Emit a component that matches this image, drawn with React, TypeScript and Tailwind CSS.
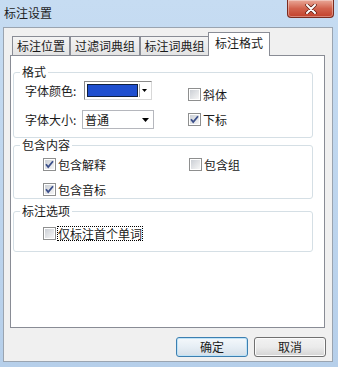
import React from 'react';

const CheckBox = ({ checked }: { checked?: boolean }) => (
  <svg width="13" height="13" viewBox="0 0 13 13" className="shrink-0">
    <defs>
      <linearGradient id="cbg" x1="0" y1="0" x2="1" y2="1">
        <stop offset="0" stopColor="#cbcfd5" />
        <stop offset="1" stopColor="#f6f6f6" />
      </linearGradient>
    </defs>
    <rect x="0.5" y="0.5" width="12" height="12" fill="#fff" stroke="#8e8f8f" />
    <rect x="2" y="2" width="9" height="9" fill="url(#cbg)" />
    {checked && (
      <path d="M3 6.2 L5.2 9 L10 3.2" fill="none" stroke="#3b4f8a" strokeWidth="1.8" />
    )}
  </svg>
);

const Option = ({ label, checked, focus }: { label: string; checked?: boolean; focus?: boolean }) => (
  <div className="flex items-center h-[13px]">
    <CheckBox checked={checked} />
    {focus ? (
      <span className="ml-[1px] border border-dotted border-black leading-[13px] px-0">{label}</span>
    ) : (
      <span className="ml-[2px] leading-[13px]">{label}</span>
    )}
  </div>
);

const Tab = ({ label, width, active }: { label: string; width: string; active?: boolean }) =>
  active ? (
    <div className={`${width} h-[24px] -mb-[1px] -ml-[1px] relative z-10 bg-white border border-b-0 border-[#898c95] flex justify-center pt-[3px] leading-[14px]`}>
      {label}
    </div>
  ) : (
    <div className={`${width} h-[19px] bg-gradient-to-b from-[#f4f4f4] to-[#e3e3e3] border border-b-0 border-[#898c95] flex justify-center pt-[2px] leading-[14px]`}>
      {label}
    </div>
  );

export default function App() {
  return (
    <div className="w-[338px] h-[367px] flex flex-col bg-gradient-to-b from-[#c6dcf2] to-[#b6cfea] font-['Noto_Sans_CJK_SC',sans-serif] text-[12px] text-[#1a1a1a] overflow-hidden">
      {/* 标题栏 */}
      <div className="h-[27px] flex justify-between shrink-0">
        <div className="pl-[4px] pt-[5px] leading-[16px] text-[12px] text-[#1e1e1e]">标注设置</div>
        <div className="mr-[4px] w-[47px] h-[18px] rounded-b-[4px] border border-t-0 border-[#7b2b1f] bg-gradient-to-b from-[#e9a898] via-[#d2634e] to-[#c2402a] shadow-[inset_0_0_0_1px_rgba(255,255,255,0.35)] flex items-center justify-center">
          <svg width="12" height="10" viewBox="0 0 12 10">
            <path d="M2 1 L10 9 M10 1 L2 9" stroke="#5a1a10" strokeWidth="3.4" strokeLinecap="round" />
            <path d="M2 1 L10 9 M10 1 L2 9" stroke="#ffffff" strokeWidth="2" strokeLinecap="round" />
          </svg>
        </div>
      </div>

      {/* 客户区 */}
      <div className="ml-[3px] mr-[5px] mb-[5px] flex-1 border border-[#9aa4b0] bg-[#f0f0f0] flex flex-col pl-[6px] pr-[7px] pt-[4px]">
        {/* 选项卡 */}
        <div className="h-[23px] flex items-end pl-[2px]">
          <Tab label="标注位置" width="w-[58px]" />
          <Tab label="过滤词典组" width="w-[70px]" />
          <Tab label="标注词典组" width="w-[69px]" />
          <Tab label="标注格式" width="w-[62px]" active />
        </div>

        <div className="h-[273px] border border-[#898c95] bg-white pl-[2px] pr-[11px] pt-[9px]">
          {/* 格式 */}
          <fieldset className="m-0 p-0 border border-[#d5dfe5] rounded-[3px]">
            <legend className="ml-[6px] px-[2px] leading-[14px]">格式</legend>
            <div className="flex pb-[8px]">
              <div className="w-[174px] pl-[11px] pt-[2px] flex flex-col gap-[10px]">
                <div className="h-[19px] flex items-center">
                  <span className="w-[59px] leading-[14px]">字体颜色:</span>
                  <div className="w-[68px] h-[19px] border border-t-[#8a8a8a] border-l-[#8a8a8a] border-r-[#d8d8d8] border-b-[#d8d8d8] bg-white flex p-[2px] gap-[1px]">
                    <div className="flex-1 border border-[#102040] bg-[#1f4fcf]" />
                    <div className="w-[10px] border-l border-[#a0a0a0] flex items-center justify-center">
                      <svg width="5" height="3" viewBox="0 0 5 3">
                        <path d="M0 0 H5 L2.5 3 Z" fill="#000" />
                      </svg>
                    </div>
                  </div>
                </div>
                <div className="h-[19px] flex items-center">
                  <span className="w-[57px] leading-[14px]">字体大小:</span>
                  <div className="w-[72px] h-[19px] border border-[#b5b7bd] bg-white flex items-center pl-[2px] pr-[4px] justify-between">
                    <span className="leading-[14px]">普通</span>
                    <svg width="7" height="4" viewBox="0 0 7 4">
                      <path d="M0 0 H7 L3.5 4 Z" fill="#000" />
                    </svg>
                  </div>
                </div>
              </div>
              <div className="pt-[9px] flex flex-col gap-[12px]">
                <Option label="斜体" />
                <Option label="下标" checked />
              </div>
            </div>
          </fieldset>

          {/* 包含内容 */}
          <fieldset className="m-0 p-0 border border-[#d5dfe5] rounded-[3px]">
            <legend className="ml-[6px] px-[2px] leading-[14px]">包含内容</legend>
            <div className="grid grid-cols-[146px_1fr] gap-y-[12px] pl-[29px] pt-[6px] pb-[2px]">
              <Option label="包含解释" checked />
              <Option label="包含组" />
              <Option label="包含音标" checked />
            </div>
          </fieldset>

          {/* 标注选项 */}
          <fieldset className="mt-[5px] p-0 border border-[#d5dfe5] rounded-[3px]">
            <legend className="ml-[6px] px-[2px] leading-[14px]">标注选项</legend>
            <div className="pl-[29px] pt-[9px] pb-[11px]">
              <Option label="仅标注首个单词" focus />
            </div>
          </fieldset>
        </div>

        {/* 按钮 */}
        <div className="mt-[9px] flex justify-end gap-[6px] -mr-[1px]">
          <button className="w-[72px] h-[20px] rounded-[3px] border border-[#3c7fb1] bg-gradient-to-b from-[#f4f8fb] via-[#e6eef5] to-[#d5dfe8] shadow-[inset_0_0_0_1px_#bfe3f7] leading-[14px] text-[12px]">
            确定
          </button>
          <button className="w-[72px] h-[20px] rounded-[3px] border border-[#707070] bg-gradient-to-b from-[#f2f2f2] via-[#ebebeb] to-[#d4d4d4] shadow-[inset_0_0_0_1px_#fbfbfb] leading-[14px] text-[12px]">
            取消
          </button>
        </div>
      </div>
    </div>
  );
}
